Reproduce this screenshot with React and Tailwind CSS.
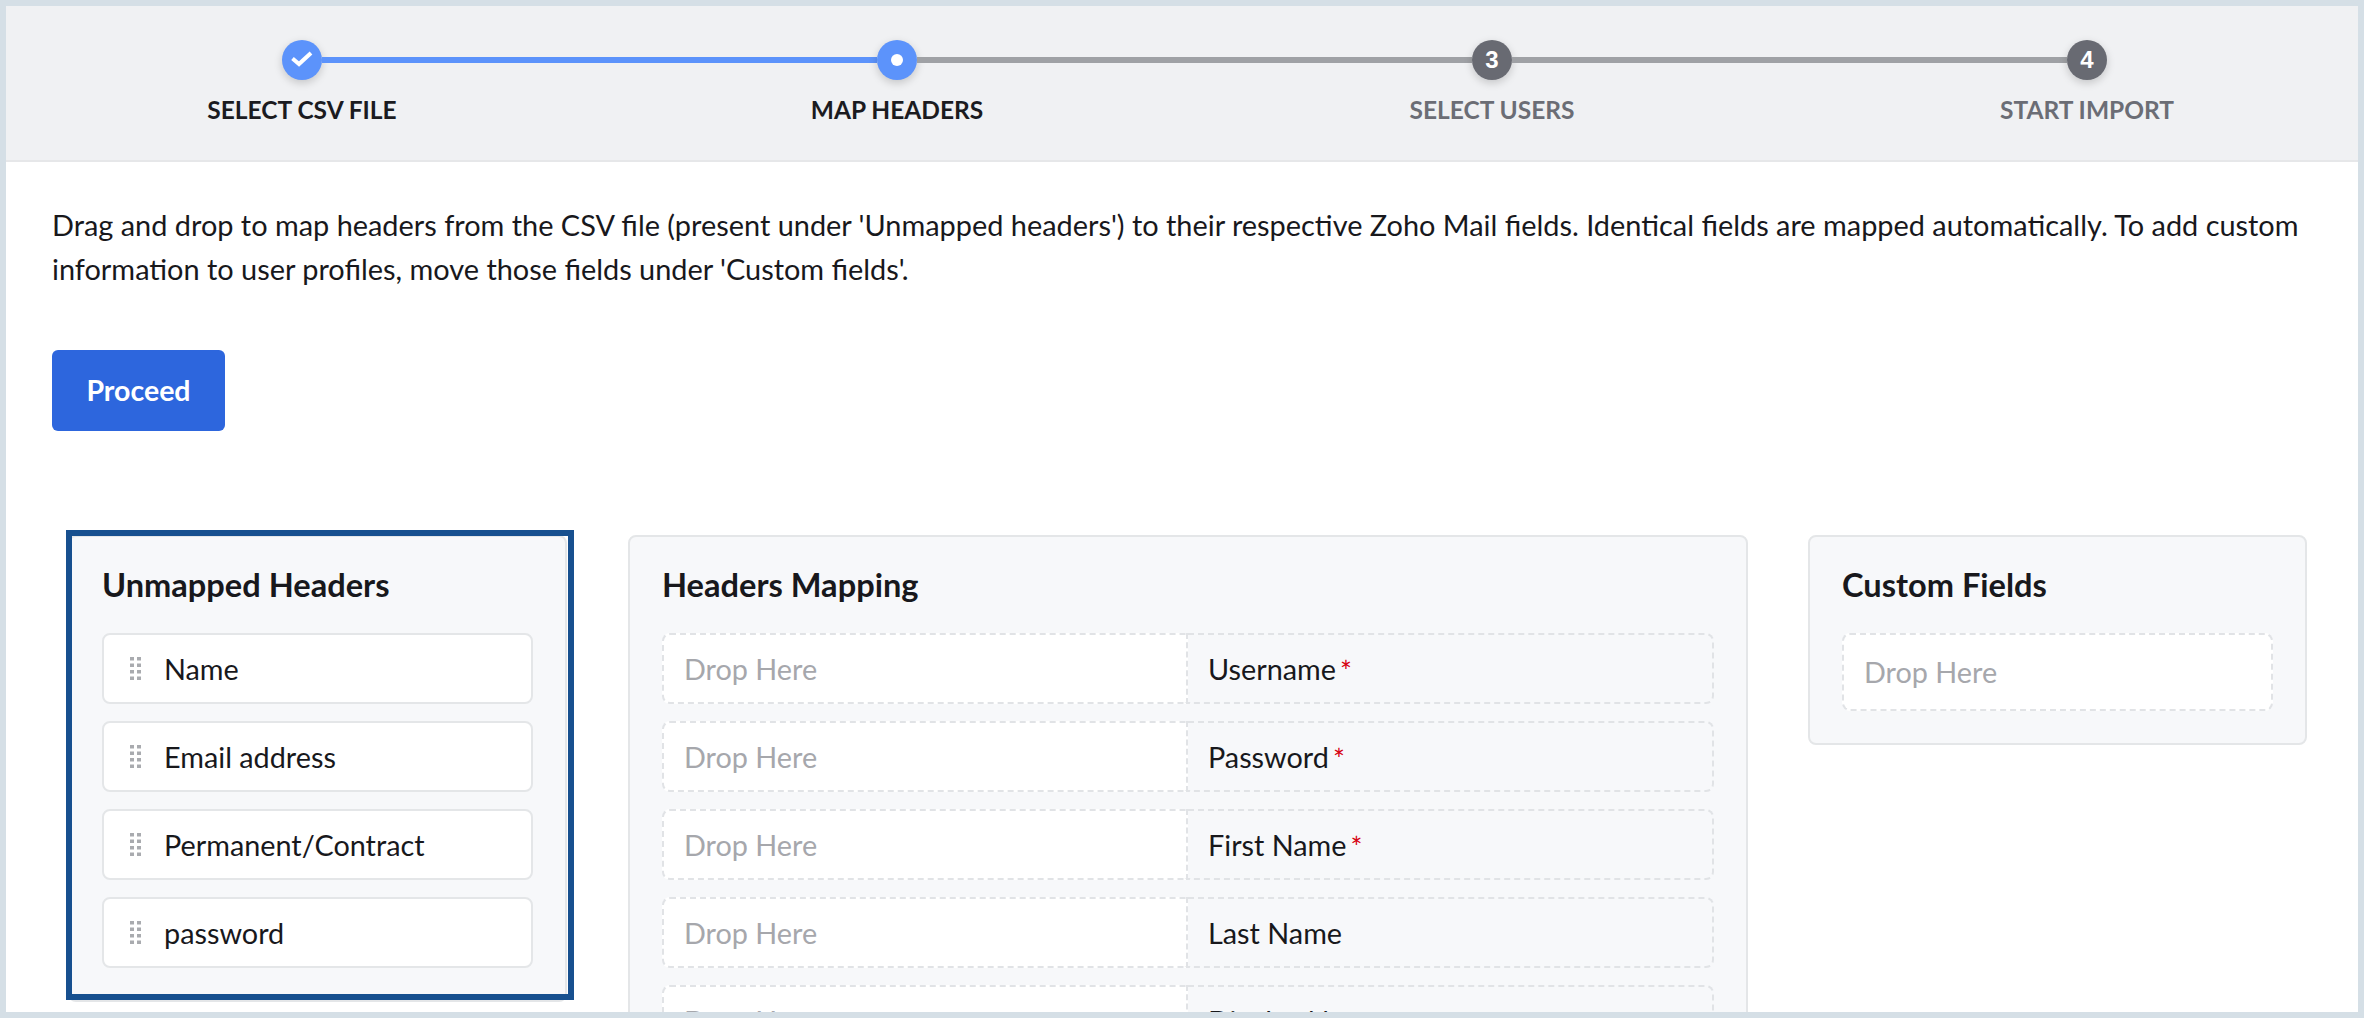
import React from "react";

const steps = [
  { label: "SELECT CSV FILE", state: "done" },
  { label: "MAP HEADERS", state: "active" },
  { label: "SELECT USERS", state: "todo", num: 3 },
  { label: "START IMPORT", state: "todo", num: 4 },
];

const unmapped = ["Name", "Email address", "Permanent/Contract", "password"];

const fields = [
  { name: "Username", required: true },
  { name: "Password", required: true },
  { name: "First Name", required: true },
  { name: "Last Name" },
  { name: "Display Name" },
];

const StepDot = ({ step }) => {
  if (step.state === "done") {
    return (
      <div className="w-10 h-10 rounded-full bg-[#5c93fb] shrink-0 flex items-center justify-center shadow-[0_3px_8px_rgba(0,0,0,0.18)]">
        <svg width="22" height="16" viewBox="0 0 22 16" fill="none" stroke="#fff" strokeWidth="4" className="mb-[2px]">
          <polyline points="1.5,7.5 8,13 20,2" />
        </svg>
      </div>
    );
  }
  if (step.state === "active") {
    return (
      <div className="w-10 h-10 rounded-full bg-[#5c93fb] shrink-0 flex items-center justify-center shadow-[0_3px_8px_rgba(0,0,0,0.18)]">
        <div className="w-3 h-3 rounded-full bg-white" />
      </div>
    );
  }
  return (
    <div className="w-10 h-10 rounded-full bg-[#686a72] shrink-0 flex items-center justify-center text-white text-[24px] font-bold font-['Liberation_Sans'] shadow-[0_3px_8px_rgba(0,0,0,0.18)]">
      {step.num}
    </div>
  );
};

const Stepper = () => (
  <div className="h-[156px] shrink-0 bg-[#f0f1f3] border-b-2 border-[#e6e7e9] pt-[34px]">
    <div className="flex items-center pl-[276px] pr-[251px]">
      {steps.map((step, i) => (
        <React.Fragment key={step.label}>
          <StepDot step={step} />
          {i < steps.length - 1 && (
            <div className={`flex-1 h-[6px] ${i === 0 ? "bg-[#5c93fb]" : "bg-[#9fa1a5]"}`} />
          )}
        </React.Fragment>
      ))}
    </div>
    <div className="flex justify-between pl-[296px] pr-[271px] mt-[10px]">
      {steps.map((step) => (
        <div key={step.label} className="w-0 flex justify-center">
          <span
            className={`whitespace-nowrap text-[24.5px] leading-[40px] font-bold ${
              step.state === "todo" ? "text-[#6b6d75]" : "text-[#1b1b1f]"
            }`}
          >
            {step.label}
          </span>
        </div>
      ))}
    </div>
  </div>
);

const Panel = ({ title, className, children }) => (
  <div className={`bg-[#f7f8fa] border-2 border-[#e4e6e8] rounded-lg px-8 pb-8 ${className}`}>
    <h3 className="text-[32.6px] leading-[40px] font-bold text-[#18181c] mt-[28px] mb-[28px]">{title}</h3>
    {children}
  </div>
);

export default function App() {
  return (
    <div className="h-screen overflow-hidden bg-[#d5dfe6] p-[6px] font-['Lato',sans-serif]">
      <div className="h-full overflow-hidden bg-white flex flex-col">
        <Stepper />
        <div className="px-[46px] pt-[41px]">
          <p className="text-[28.9px] leading-[44px] text-[#18181c]">
            Drag and drop to map headers from the CSV file (present under 'Unmapped headers') to their respective Zoho
            Mail fields. Identical fields are mapped automatically. To add custom information to user profiles, move
            those fields under 'Custom fields'.
          </p>
          <button className="mt-[59px] w-[173px] h-[81px] rounded-md bg-[#2d66dd] text-white text-[28.5px] font-bold pb-[1px]">
            Proceed
          </button>
        </div>
        <div className="flex items-start gap-[61px] pl-[62px] mt-[104px] relative">
          <div className="relative shrink-0">
            <Panel title="Unmapped Headers" className="w-[499px]">
              <div className="flex flex-col gap-[17px]">
                {unmapped.map((h) => (
                  <div
                    key={h}
                    className="h-[71px] bg-white border-2 border-[#e4e6e8] rounded-lg flex items-center pl-[26px] pt-[2px] text-[28.8px] text-[#18181c]"
                  >
                    <svg width="11" height="23" viewBox="0 0 11 23" className="mr-[23px] mb-[2px] shrink-0 text-[#a9abaf]" fill="currentColor">
                      <rect x="0" y="0" width="4" height="3.5" />
                      <rect x="7" y="0" width="4" height="3.5" />
                      <rect x="0" y="6.5" width="4" height="3.5" />
                      <rect x="7" y="6.5" width="4" height="3.5" />
                      <rect x="0" y="13" width="4" height="3.5" />
                      <rect x="7" y="13" width="4" height="3.5" />
                      <rect x="0" y="19.5" width="4" height="3.5" />
                      <rect x="7" y="19.5" width="4" height="3.5" />
                    </svg>
                    {h}
                  </div>
                ))}
              </div>
            </Panel>
            <div className="absolute left-[-2px] top-[-5px] w-[508px] h-[470px] border-[6px] border-[#17508f] pointer-events-none" />
          </div>
          <Panel title="Headers Mapping" className="w-[1120px] shrink-0">
            <div className="flex flex-col gap-[17px]">
              {fields.map((f) => (
                <div key={f.name} className="h-[71px] flex text-[28.8px]">
                  <div className="w-[526px] bg-white border-2 border-dashed border-[#e1e3e6] rounded-l-lg flex items-center pl-[20px] pt-[2px] text-[#a6a7ac]">
                    Drop Here
                  </div>
                  <div className="flex-1 border-2 border-l-0 border-dashed border-[#e1e3e6] rounded-r-lg flex items-center pl-[20px] pt-[2px] text-[#18181c]">
                    {f.name}
                    {f.required && <span className="text-[#d6000f] ml-[4px] mt-[3px] text-[28px]">*</span>}
                  </div>
                </div>
              ))}
            </div>
          </Panel>
          <Panel title="Custom Fields" className="w-[499px] shrink-0 -ml-px">
            <div className="h-[78px] bg-white border-2 border-dashed border-[#e1e3e6] rounded-lg flex items-center pl-[20px] pt-[2px] text-[28.8px] text-[#a6a7ac]">
              Drop Here
            </div>
          </Panel>
        </div>
      </div>
    </div>
  );
}
